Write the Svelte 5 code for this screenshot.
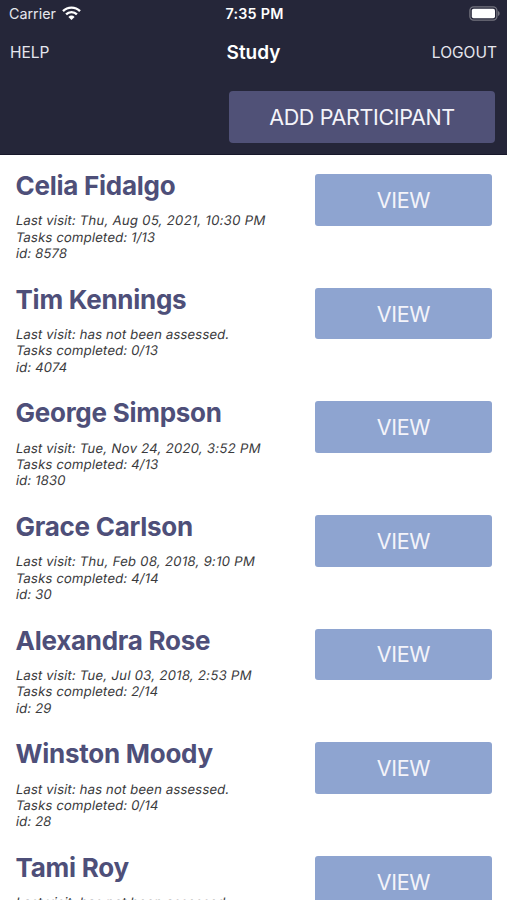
<script>
  const participants = [
    { id: 8578, name: 'Celia Fidalgo', lastVisit: 'Thu, Aug 05, 2021, 10:30 PM', done: 1, total: 13 },
    { id: 4074, name: 'Tim Kennings', lastVisit: null, done: 0, total: 13 },
    { id: 1830, name: 'George Simpson', lastVisit: 'Tue, Nov 24, 2020, 3:52 PM', done: 4, total: 13 },
    { id: 30, name: 'Grace Carlson', lastVisit: 'Thu, Feb 08, 2018, 9:10 PM', done: 4, total: 14 },
    { id: 29, name: 'Alexandra Rose', lastVisit: 'Tue, Jul 03, 2018, 2:53 PM', done: 2, total: 14 },
    { id: 28, name: 'Winston Moody', lastVisit: null, done: 0, total: 14 },
    { id: 27, name: 'Tami Roy', lastVisit: null, done: 0, total: 14 },
  ];
</script>

<div class="screen">
  <header>
    <div class="status-bar">
      <div class="carrier">
        <span>Carrier</span>
        <svg class="wifi" viewBox="0 0 19 14">
          <path d="M9.5 14 L6.4 10.9 A4.4 4.4 0 0 1 12.6 10.9 Z" fill="currentColor" />
          <path d="M4.1 8.4 A7.6 7.6 0 0 1 14.9 8.4" fill="none" stroke="currentColor" stroke-width="2.4" />
          <path d="M1 5.2 A12 12 0 0 1 18 5.2" fill="none" stroke="currentColor" stroke-width="2.4" />
        </svg>
      </div>
      <span class="time">7:35 PM</span>
      <svg class="battery" viewBox="0 0 31 15">
        <rect x="0.9" y="0.9" width="27" height="13.2" rx="3.8" fill="none" stroke="#74747f" stroke-width="1.3" />
        <rect x="2.8" y="2.8" width="23.2" height="9.4" rx="1.8" fill="currentColor" />
        <path d="M29 5 C31.2 5.8 31.2 9.2 29 10 Z" fill="#74747f" />
      </svg>
    </div>
    <nav>
      <button class="nav-btn">HELP</button>
      <h1>Study</h1>
      <button class="nav-btn logout">LOGOUT</button>
    </nav>
    <div class="actions">
      <button class="add-btn">ADD PARTICIPANT</button>
    </div>
  </header>

  <main>
    {#each participants as p (p.id)}
      <section class="participant">
        <div class="info">
          <h2>{p.name}</h2>
          <p>
            Last visit:
            {#if p.lastVisit}
              <span class="date">{p.lastVisit}</span>
            {:else}
              has not been assessed.
            {/if}
          </p>
          <p>Tasks completed: {p.done}/{p.total}</p>
          <p>id: {p.id}</p>
        </div>
        <button class="view-btn">VIEW</button>
      </section>
    {/each}
  </main>
</div>

<style>
  :global(body) {
    overflow: hidden;
  }

  .screen {
    height: 900px;
    display: flex;
    flex-direction: column;
    overflow: hidden;
    background: #fff;
    font-family: Inter, 'Liberation Sans', sans-serif;
  }

  button {
    border: none;
    padding: 0;
    background: none;
    color: #f4f4fa;
    font-family: inherit;
    cursor: pointer;
  }

  header {
    flex-shrink: 0;
    box-sizing: border-box;
    height: 154.5px;
    background: #252639;
    border-bottom: 1px solid #17172a;
    color: white;
  }

  .status-bar,
  nav {
    display: grid;
    grid-template-columns: 1fr auto 1fr;
    align-items: center;
  }

  .status-bar {
    height: 27px;
    padding: 0 7px 0 9px;
    font-size: 14.3px;
  }

  .carrier {
    display: flex;
    align-items: center;
    gap: 6px;
    color: #e6e6ee;
  }

  .wifi {
    width: 19px;
    height: 14px;
    margin-top: -1px;
    color: white;
  }

  .time {
    font-size: 14.3px;
    font-weight: 600;
    letter-spacing: 0.25px;
  }

  .battery {
    width: 31px;
    height: 15px;
    justify-self: end;
  }

  nav {
    height: 51px;
    padding: 0 10px;
  }

  .nav-btn {
    color: #e6e6ee;
    font-size: 15.5px;
    justify-self: start;
  }

  .logout {
    justify-self: end;
  }

  h1 {
    margin: 0;
    font-size: 19px;
    font-weight: 600;
  }

  .actions {
    display: flex;
    justify-content: flex-end;
    padding: 13px 12px 0;
  }

  .add-btn {
    width: 266px;
    height: 52px;
    border-radius: 4px;
    background: #505177;
    font-size: 21.5px;
    letter-spacing: -0.35px;
  }

  main {
    flex: 1;
    min-height: 0;
    overflow: hidden;
    padding-top: 14.5px;
  }

  .participant {
    display: flex;
    justify-content: space-between;
    align-items: flex-start;
    box-sizing: border-box;
    height: 113.65px;
    padding: 0 15px 0 15.5px;
  }

  h2 {
    margin: 0 0 10.4px;
    color: #4e4f79;
    font-size: 26px;
    font-weight: 700;
    line-height: 33px;
    letter-spacing: -0.26px;
  }

  /* slanted roman letterforms rather than the true italic */
  p {
    margin: 0;
    color: #3a3a3c;
    font-size: 13.2px;
    line-height: 16.3px;
    letter-spacing: 0.12px;
    white-space: nowrap;
    transform: skewX(-10deg);
  }

  .date {
    letter-spacing: 0.25px;
  }

  .view-btn {
    width: 177px;
    height: 51.4px;
    margin-top: 5.2px;
    border-radius: 3px;
    background: #8ea4d0;
    font-size: 21.5px;
    letter-spacing: -0.35px;
  }
</style>
